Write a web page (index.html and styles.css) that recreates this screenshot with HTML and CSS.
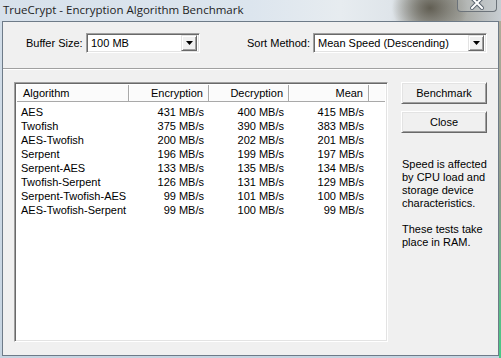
FILE: index.html
```html
<!DOCTYPE html>
<html lang="en">
  <head>
    <meta charset="UTF-8" />
    <title>TrueCrypt - Encryption Algorithm Benchmark</title>
    <link rel="stylesheet" href="styles.css">
  </head>
  <body>
    <div class="window">
      <div class="titlebar">
        <span class="title">TrueCrypt - Encryption Algorithm Benchmark</span>
        <div class="close_box">
          <svg width="14" height="10" viewBox="0 0 14 10">
            <path d="M2 -2 L12 8 M12 -2 L2 8" stroke="#5b6570" stroke-width="4" stroke-linecap="square" />
            <path d="M2 -2 L12 8 M12 -2 L2 8" stroke="#ffffff" stroke-width="2" stroke-linecap="square" />
          </svg>
        </div>
      </div>

      <div class="client">
        <div class="options">
          <label class="opt_label buffer_label">Buffer Size:</label>
          <div class="combo buffer_combo">
            <span class="combo_text">100 MB</span>
            <span class="combo_btn">
              <svg width="7" height="4" viewBox="0 0 7 4"><polygon points="0,0 7,0 3.5,4" fill="#000" /></svg>
            </span>
          </div>
          <label class="opt_label sort_label">Sort Method:</label>
          <div class="combo sort_combo">
            <span class="combo_text">Mean Speed (Descending)</span>
            <span class="combo_btn">
              <svg width="7" height="4" viewBox="0 0 7 4"><polygon points="0,0 7,0 3.5,4" fill="#000" /></svg>
            </span>
          </div>
        </div>

        <div class="separator"></div>

        <div class="main">
          <div class="list">
            <div class="list_head">
              <div class="hcell left">Algorithm</div>
              <div class="hcell">Encryption</div>
              <div class="hcell">Decryption</div>
              <div class="hcell">Mean</div>
              <div class="hcell rest"></div>
            </div>
            <div class="list_body">
              <div class="row"><span class="name">AES</span><span>431 MB/s</span><span>400 MB/s</span><span>415 MB/s</span></div>
              <div class="row"><span class="name">Twofish</span><span>375 MB/s</span><span>390 MB/s</span><span>383 MB/s</span></div>
              <div class="row"><span class="name">AES-Twofish</span><span>200 MB/s</span><span>202 MB/s</span><span>201 MB/s</span></div>
              <div class="row"><span class="name">Serpent</span><span>196 MB/s</span><span>199 MB/s</span><span>197 MB/s</span></div>
              <div class="row"><span class="name">Serpent-AES</span><span>133 MB/s</span><span>135 MB/s</span><span>134 MB/s</span></div>
              <div class="row"><span class="name">Twofish-Serpent</span><span>126 MB/s</span><span>131 MB/s</span><span>129 MB/s</span></div>
              <div class="row"><span class="name">Serpent-Twofish-AES</span><span>99 MB/s</span><span>101 MB/s</span><span>100 MB/s</span></div>
              <div class="row"><span class="name">AES-Twofish-Serpent</span><span>99 MB/s</span><span>100 MB/s</span><span>99 MB/s</span></div>
            </div>
          </div>

          <div class="side">
            <button class="btn">Benchmark</button>
            <button class="btn close_btn">Close</button>
            <p class="note">Speed is affected<br>by CPU load and<br>storage device<br>characteristics.<br><br>These tests take<br>place in RAM.</p>
          </div>
        </div>
      </div>
    </div>
  </body>
</html>
```

FILE: styles.css
```css
body {
  margin: 0;
  width: 501px;
  height: 358px;
  overflow: hidden;
  font-family: "Liberation Sans", Arial, sans-serif;
  font-size: 11px;
  color: #000;
  background:
    linear-gradient(to bottom, #b4ad9c 0%, #8c9c8a 55%, #48c986 100%) right top / 2px 100% no-repeat,
    linear-gradient(to bottom, #d3dee9, #c6d4e1);
}
.window {
  display: flex;
  flex-direction: column;
}

/* glass title bar */
.titlebar {
  height: 21px;
  display: flex;
  align-items: flex-start;
  background:
    radial-gradient(ellipse 38px 30px at 430px 8px, rgba(88, 84, 72, 0.9), rgba(88, 84, 72, 0) 100%),
    linear-gradient(to right, #d7e1eb 0%, #dce5ee 50%, #e7ecf0 68%, #dfe5ea 78%, #b8bbb8 84%, #a5a6a0 92%, #c8ced3 100%);
}
.title {
  font-family: "Open Sans", "Liberation Sans", sans-serif;
  font-size: 11.5px;
  line-height: 15px;
  padding: 2px 0 0 3px;
  color: #1e1e1e;
}
.close_box {
  margin-left: auto;
  margin-right: 4px;
  width: 40px;
  height: 12px;
  box-sizing: border-box;
  border: 1px solid #6c737a;
  border-top: 0;
  border-radius: 0 0 4px 4px;
  background: rgba(200, 205, 210, 0.35);
  display: flex;
  justify-content: center;
}

/* client area */
.client {
  margin-left: 2px;
  width: 497px;
  height: 335px;
  box-sizing: border-box;
  border: 1px solid #6e7b88;
  background: #f0f0f0;
}
.options {
  display: flex;
  align-items: center;
  margin-top: 11px;
  height: 20px;
}
.opt_label {
  white-space: nowrap;
}
.buffer_label {
  margin-left: 23px;
  width: 60px;
}
.sort_label {
  margin-left: 47px;
  width: 66px;
}
.combo {
  height: 20px;
  box-sizing: border-box;
  border-top: 1px solid #a0a0a0;
  border-left: 1px solid #a0a0a0;
  border-right: 1px solid #fff;
  border-bottom: 1px solid #fff;
  box-shadow: inset 1px 1px #696969, inset -1px -1px #e3e3e3;
  background: #fff;
  display: flex;
  align-items: center;
  padding: 2px 2px 2px 4px;
}
.buffer_combo {
  width: 114px;
}
.sort_combo {
  width: 174px;
}
.combo_text {
  flex: 1;
  white-space: nowrap;
}
.combo_btn {
  width: 16px;
  height: 16px;
  box-sizing: border-box;
  background: #f0f0f0;
  border-top: 1px solid #e3e3e3;
  border-left: 1px solid #e3e3e3;
  border-right: 1px solid #696969;
  border-bottom: 1px solid #696969;
  box-shadow: inset 1px 1px #fff, inset -1px -1px #a0a0a0;
  display: flex;
  align-items: center;
  justify-content: center;
}
.separator {
  margin-top: 15px;
  border-top: 1px solid #a0a0a0;
  border-bottom: 1px solid #fff;
}

/* list + side panel */
.main {
  display: flex;
  margin-top: 12px;
  padding-left: 11px;
}
.list {
  width: 374px;
  height: 260px;
  box-sizing: border-box;
  border-top: 1px solid #a0a0a0;
  border-left: 1px solid #a0a0a0;
  border-right: 1px solid #fff;
  border-bottom: 1px solid #fff;
  box-shadow: inset 1px 1px #696969, inset -1px -1px #e3e3e3;
  background: #fff;
  padding: 2px;
}
.list_head {
  display: grid;
  grid-template-columns: 112px 80px 80px 80px 1fr;
  border-bottom: 1px solid #a9a9a9;
  background: #fbfbfb;
}
.hcell {
  height: 16px;
  line-height: 16px;
  text-align: right;
  padding: 0 5px 0 0;
  border-right: 1px solid #a9a9a9;
  box-shadow: inset 1px 0 #fff;
  white-space: nowrap;
}
.hcell.left {
  text-align: left;
  padding-left: 6px;
}
.hcell.rest {
  border-right: 0;
}
.list_body {
  margin-top: 3px;
}
.row {
  display: grid;
  grid-template-columns: 112px 80px 80px 80px;
  height: 14px;
  line-height: 14px;
}
.row span {
  text-align: right;
  padding-right: 5px;
  white-space: nowrap;
}
.row .name {
  text-align: left;
  padding-left: 4px;
}

.side {
  margin-left: 13px;
  width: 86px;
  display: flex;
  flex-direction: column;
}
.btn {
  height: 22px;
  width: 86px;
  margin: 0;
  padding: 0;
  font-family: "Liberation Sans", Arial, sans-serif;
  font-size: 11px;
  color: #000;
  background: #f0f0f0;
  border-top: 1px solid #fff;
  border-left: 1px solid #fff;
  border-right: 1px solid #696969;
  border-bottom: 1px solid #696969;
  box-shadow: inset 1px 1px #e3e3e3, inset -1px -1px #a0a0a0;
}
.close_btn {
  margin-top: 7px;
}
.note {
  margin: 25px 0 0 1px;
  line-height: 13px;
}
```
